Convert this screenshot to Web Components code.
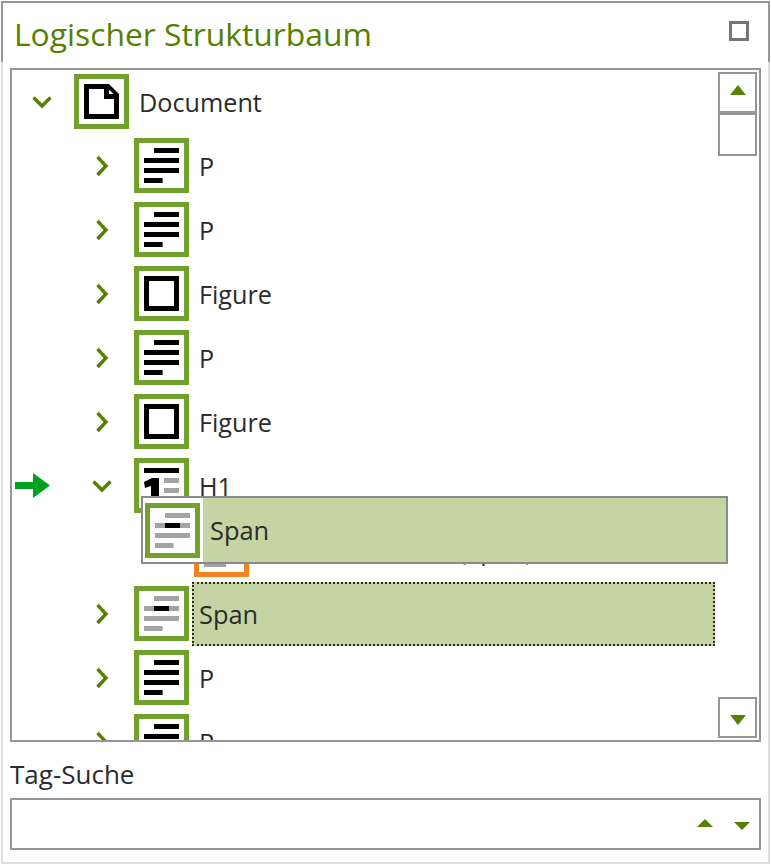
<!DOCTYPE html>
<html lang="de">
<head>
<meta charset="utf-8">
<title>Logischer Strukturbaum</title>
<style>
  html, body { margin: 0; padding: 0; background: #fff; }
  body { font-family: "Open Sans", "Noto Sans", sans-serif; color: #2b2b2b; }
</style>
</head>
<body>
<tag-panel>
  <span slot="title">Logischer Strukturbaum</span>
  <tree-row level="0" icon="doc" open>Document</tree-row>
  <tree-row level="1" icon="p">P</tree-row>
  <tree-row level="1" icon="p">P</tree-row>
  <tree-row level="1" icon="fig">Figure</tree-row>
  <tree-row level="1" icon="p">P</tree-row>
  <tree-row level="1" icon="fig">Figure</tree-row>
  <tree-row level="1" icon="h1" open marker>H1</tree-row>
  <tree-row level="2" icon="leaf" tone="orange" leaf indent="200">(Span)</tree-row>
  <tree-row level="1" icon="span" selected>Span</tree-row>
  <tree-row level="1" icon="p">P</tree-row>
  <tree-row level="1" icon="p">P</tree-row>
  <drag-ghost slot="overlay">Span</drag-ghost>
</tag-panel>

<script>
// bars shared by the paragraph style icons
const bars = (fill, last) => `<g fill="${fill}"><rect x="20" y="10" width="25" height="5"/><rect x="10" y="20" width="35" height="5"/><rect x="10" y="30" width="35" height="5"/><rect x="10" y="40" width="${last}" height="5"/></g>`;

const icons = {
  doc: `<path fill-rule="evenodd" d="M10 10H35L45 20V45H10ZM15 15V40H40V25H30V15ZM35 15.5V20H39.5Z" fill="#000"/>`,
  p: bars('#000', 18.6),
  fig: `<path fill-rule="evenodd" d="M10 10H45V45H10ZM15 15V40H40V15Z" fill="#000"/>`,
  h1: `<g fill="#000"><rect x="10" y="10" width="35" height="5"/><path d="M10 24L18 20H25V45H17V28L11 30Z"/></g><g fill="#a3a3a3"><rect x="30" y="20" width="15" height="5"/><rect x="30" y="30" width="15" height="5"/></g>`,
  span: bars('#a3a3a3', 18.6) + `<rect x="20" y="20" width="15" height="5" fill="#000"/>`,
  leaf: bars('#a3a3a3', 22)
};

class TagIcon extends HTMLElement {
  constructor() {
    super();
    this.attachShadow({ mode: 'open' });
  }
  connectedCallback() {
    const tone = this.getAttribute('tone') === 'orange' ? '#f28522' : '#72a12e';
    this.shadowRoot.innerHTML = `
      <style>
        :host { display: block; width: 55px; height: 55px; flex: none; }
        svg { display: block; }
      </style>
      <svg width="55" height="55" viewBox="0 0 55 55">
        <rect width="55" height="55" fill="${tone}"/>
        <rect x="5" y="5" width="45" height="45" fill="#fff"/>
        ${icons[this.getAttribute('name')] || ''}
      </svg>`;
  }
}
customElements.define('tag-icon', TagIcon);

class TreeRow extends HTMLElement {
  constructor() {
    super();
    this.attachShadow({ mode: 'open' });
  }
  connectedCallback() {
    const level = +this.getAttribute('level') || 0;
    const open = this.hasAttribute('open');
    const chevron = this.hasAttribute('leaf') ? '' : open
      ? '<path d="M2.5 9.5L11 18L19.5 9.5" />'
      : '<path d="M6.5 5L15 14L6.5 23" />';
    const marker = this.hasAttribute('marker')
      ? `<svg class="marker" width="35" height="25" viewBox="0 0 35 25"><path d="M0 9H18V0L35 12.5L18 25V16H0Z" fill="#00a021"/></svg>`
      : '';
    this.shadowRoot.innerHTML = `
      <style>
        :host { display: block; height: 64px; position: relative; }
        .row { display: flex; align-items: center; height: 55px; padding-left: ${19 + level * 60}px; }
        .twist { width: 22px; height: 28px; flex: none; margin-right: 21px; }
        .twist path { fill: none; stroke: #568000; stroke-width: 3.4; }
        .label { margin-left: 10px; padding-left: ${+this.getAttribute('indent') || 0}px; padding-top: 2px; font-size: 25.2px; line-height: 33px; white-space: nowrap; }
        :host([selected]) .label {
          margin-left: 3px; flex: 1; height: 64px; margin-right: 44px; padding: 0 0 0 5px;
          font-size: 25.4px; line-height: 60px; background: #c5d4a3; border: 2px dotted #2a2e20; box-sizing: border-box;
        }
        .marker { position: absolute; left: 3px; top: 15px; }
      </style>
      <div class="row" part="row">
        ${marker}
        <svg class="twist" viewBox="0 0 22 28">${chevron}</svg>
        <tag-icon name="${this.getAttribute('icon')}" tone="${this.getAttribute('tone') || ''}"></tag-icon>
        <span class="label"><slot></slot></span>
      </div>`;
  }
}
customElements.define('tree-row', TreeRow);

class DragGhost extends HTMLElement {
  constructor() {
    super();
    this.attachShadow({ mode: 'open' });
    this.shadowRoot.innerHTML = `
      <style>
        :host {
          position: absolute; left: 129px; top: 426px; width: 587px; height: 68px;
          box-sizing: border-box; border: 2px solid #8a8a8a; background: #c5d4a3;
          display: flex; align-items: stretch; font-size: 25.4px; color: #2b2b2b;
        }
        .cell { background: #fff; padding: 0 3px 0 2px; display: flex; align-items: center; }
        .text { margin-left: 7px; align-self: center; }
      </style>
      <div class="cell"><tag-icon name="span"></tag-icon></div>
      <span class="text"><slot></slot></span>`;
  }
}
customElements.define('drag-ghost', DragGhost);

class ScrollButton extends HTMLElement {
  constructor() {
    super();
    this.attachShadow({ mode: 'open' });
  }
  connectedCallback() {
    const up = this.getAttribute('dir') === 'up';
    this.shadowRoot.innerHTML = `
      <style>
        :host { display: flex; align-items: center; justify-content: center; width: 39px; height: 41px; box-sizing: border-box; border: 2px solid #969696; background: #fff; }
        svg { display: block; margin-top: ${up ? -5 : 4}px; }
      </style>
      ${this.hasAttribute('blank') ? '' : `<svg width="16" height="10" viewBox="0 0 16 10"><path d="${up ? 'M8 0L16 10H0Z' : 'M0 0H16L8 10Z'}" fill="#568000"/></svg>`}`;
  }
}
customElements.define('scroll-button', ScrollButton);

class TagPanel extends HTMLElement {
  constructor() {
    super();
    this.attachShadow({ mode: 'open' });
    this.shadowRoot.innerHTML = `
      <style>
        :host { display: block; width: 771px; height: 864px; box-sizing: border-box; padding: 1px 1px 0 1px; }
        .frame { height: 100%; box-sizing: border-box; border: 2px solid #dedede; position: relative; padding: 0 7px 0 7px; }
        .frame::before { content: ""; position: absolute; left: -2px; right: -2px; top: -2px; height: 61px; border: 2px solid #969696; border-bottom: 0; box-sizing: border-box; }
        .head { display: flex; align-items: center; justify-content: space-between; height: 65px; padding: 0 1px 4px 4px; box-sizing: border-box; }
        h1 { margin: 0; font-weight: 400; font-size: 31.8px; line-height: 44px; color: #568000; }
        .max { width: 20px; height: 20px; box-sizing: border-box; border: 3px solid #767676; margin: -5px 11px 0 0; }
        .tree { height: 674px; box-sizing: border-box; border: 2px solid #969696; position: relative; overflow: hidden; }
        .rows { padding-top: 4px; }
        .bar { position: absolute; right: 2px; top: 2px; bottom: 2px; display: flex; flex-direction: column; }
        .spacer { flex: 1; }
        label { display: block; font-size: 26px; line-height: 32px; margin-top: 16px; color: #2b2b2b; }
        .search { height: 52px; margin-top: 8px; box-sizing: border-box; border: 2px solid #969696; display: flex; align-items: center; justify-content: flex-end; gap: 21px; padding: 0 9px 0 0; }
        .search svg { display: block; }
      </style>
      <div class="frame">
        <div class="head"><h1><slot name="title"></slot></h1><div class="max"></div></div>
        <div class="tree">
          <div class="rows"><slot></slot></div>
          <div class="bar">
            <scroll-button dir="up"></scroll-button>
            <scroll-button blank style="height:43px"></scroll-button>
            <div class="spacer"></div>
            <scroll-button dir="down"></scroll-button>
          </div>
          <slot name="overlay"></slot>
        </div>
        <label>Tag-Suche</label>
        <div class="search">
          <svg style="margin-top:-3px" width="16" height="8" viewBox="0 0 16 8"><path d="M8 0L16 8H0Z" fill="#568000"/></svg>
          <svg style="margin-top:3px" width="16" height="8" viewBox="0 0 16 8"><path d="M0 0H16L8 8Z" fill="#568000"/></svg>
        </div>
      </div>`;
  }
}
customElements.define('tag-panel', TagPanel);
</script>
</body>
</html>
